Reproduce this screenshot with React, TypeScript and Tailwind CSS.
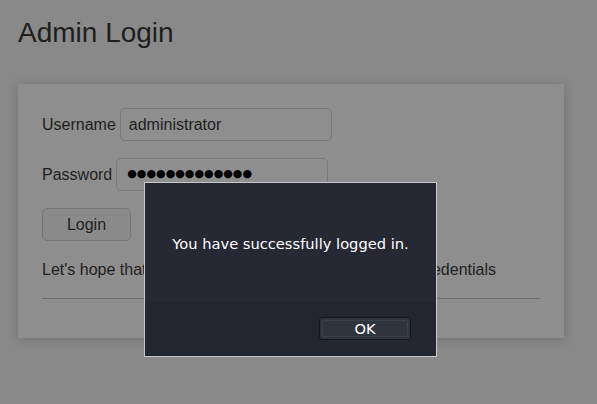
import React from "react";

export default function App() {
  return (
    <div className="relative w-[597px] h-[404px] overflow-hidden bg-[#898989]" style={{ fontFamily: '"Liberation Sans", Arial, sans-serif' }}>
      <div className="px-[18px] pt-[17px]">
        <h1 className="text-[28px] leading-[32px] text-[#1e1e1e]">Admin Login</h1>
        <div className="mt-[35px] w-[546px] h-[254px] bg-[#8e8e8e] shadow-[0_2px_10px_rgba(0,0,0,0.18)] px-[24px] pt-[24px] text-[16px] text-[#1e1e1e]">
          <div className="flex items-center h-[33px]">
            <span>Username</span>
            <div className="ml-[4px] w-[212px] h-[33px] rounded-[5px] border border-[#7a7a7a] bg-[#8e8e8e] pl-[8px] flex items-center">administrator</div>
          </div>
          <div className="flex items-center h-[33px] mt-[17px]">
            <span>Password</span>
            <div className="ml-[4px] w-[212px] h-[33px] rounded-[5px] border border-[#7a7a7a] bg-[#8e8e8e] pl-[10px] flex items-center text-[11px] text-black" style={{ fontFamily: '"DejaVu Sans", sans-serif' }}>●●●●●●●●●●●●●</div>
          </div>
          <div className="mt-[17px] w-[89px] h-[33px] rounded-[5px] border border-[#767676] bg-[#8a8a8a] flex items-center justify-center">Login</div>
          <p className="mt-[19px] leading-[20px] whitespace-nowrap">Let's hope that nobody will ever be able to find these credentials</p>
          <div className="mt-[18px] w-[498px] h-px bg-[#6f6f6f]"></div>
        </div>
      </div>
      <div className="absolute left-[144px] top-[182px] w-[293px] h-[175px] border border-[#c9c9c9] bg-[#23262f] flex flex-col" style={{ fontFamily: '"DejaVu Sans", sans-serif' }}>
        <div className="h-[119px] bg-[#262833] flex items-center justify-center text-[14.67px] text-white pt-[2px]">You have successfully logged in.</div>
        <div className="flex-1 flex justify-end items-start pr-[25px] pt-[15px]">
          <div className="w-[92px] h-[23px] rounded-[3px] border border-[#15171c] bg-[#2f333e] p-[2px]">
            <div className="w-full h-full rounded-[2px] border border-[#3b404c] bg-[#30343f] flex items-center justify-center text-[14.67px] text-white">OK</div>
          </div>
        </div>
      </div>
    </div>
  );
}
